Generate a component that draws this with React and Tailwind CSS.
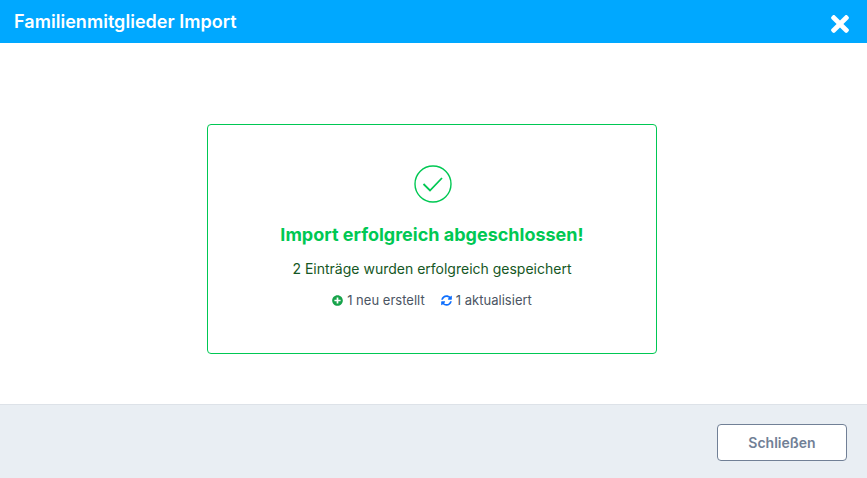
import React from "react";
import { FaTimes, FaPlusCircle, FaSyncAlt } from "react-icons/fa";

function App() {
  return (
    <div className="flex h-[478px] w-[867px] flex-col bg-white font-['Inter',sans-serif]">
      <header className="flex h-[43px] shrink-0 items-center justify-between bg-[#00a8ff] pl-[14px] pr-[18px]">
        <h1 className="text-[18px] font-semibold tracking-[0.04px] text-white">Familienmitglieder Import</h1>
        <FaTimes className="mt-[5px] h-[26px] w-[18px] text-white" />
      </header>

      <main className="flex-1 pt-[81px] pr-[3px]">
        <div className="mx-auto flex h-[230px] w-[450px] flex-col items-center rounded border border-[#00c853] pt-[39px]">
          <svg className="mt-[1px] ml-[1px]" width="38" height="38" viewBox="0 0 38 38" fill="none" stroke="#00c853">
            <circle cx="19" cy="19" r="18" strokeWidth="1.4" />
            <path d="M9.5 19l6.5 6.5L28 13" strokeWidth="1.8" />
          </svg>
          <h2 className="mt-[20px] text-[18px] leading-[24px] font-bold text-[#00c853]">
            Import erfolgreich abgeschlossen!
          </h2>
          <p className="mt-[10px] text-[14px] leading-[24px] text-[#155724]">
            2 Einträge wurden erfolgreich gespeichert
          </p>
          <div className="mt-[9px] flex items-center gap-[16px] text-[13px] leading-[20px] tracking-[0.02px] text-[#4b5563]">
            <span className="flex items-center gap-[4px]">
              <FaPlusCircle className="h-[11px] w-[11px] text-[#16a34a]" />
              1 neu erstellt
            </span>
            <span className="flex items-center gap-[4px]">
              <FaSyncAlt className="h-[11px] w-[11px] text-[#0d6efd]" />
              1 aktualisiert
            </span>
          </div>
        </div>
      </main>

      <footer className="flex h-[74px] shrink-0 items-center justify-end border-t border-[#dde2e8] bg-[#e9eef3] pr-[20px]">
        <button className="mt-[2px] h-[37px] w-[130px] rounded border border-[#718096] bg-white text-[14px] font-semibold text-[#718096]">
          Schließen
        </button>
      </footer>
    </div>
  );
}

export default App;
